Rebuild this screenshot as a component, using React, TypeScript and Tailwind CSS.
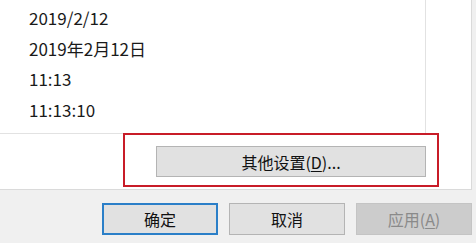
const font = { fontFamily: '"Noto Sans CJK SC", "Noto Sans", sans-serif' };

const rows = ["2019/2/12", "2019年2月12日", "11:13", "11:13:10"];

function Btn({ children, kind }: { children: React.ReactNode; kind?: "default" | "disabled" }) {
  const cls =
    kind === "default"
      ? "border-2 border-[#2b7fc8] bg-[#e1e1e1] text-[#111]"
      : kind === "disabled"
        ? "border border-[#c4c4c4] bg-[#cccccc] text-[#8a8a8a]"
        : "border border-[#b4b4b4] bg-[#e1e1e1] text-[#111]";
  return (
    <div className={`flex h-[32px] w-[116px] items-center justify-center text-[16px] ${cls}`}>{children}</div>
  );
}

export default function App() {
  return (
    <div className="relative h-[243px] w-[476px] overflow-hidden bg-[#f0f0f0]" style={font}>
      <div className="w-[472px] border-r border-b border-[#dadada] bg-white pb-[12px]">
        <div className="h-[134px] w-[426px] border-r border-b border-[#e2e2e2] bg-white pl-[29px] pt-[3px] text-[17px] leading-[30.5px] text-[#1a1a1a]">
          {rows.map((r) => (
            <div key={r}>{r}</div>
          ))}
        </div>
        <div className="pl-[156px] pt-[12px]">
          <div className="flex h-[31px] w-[270px] items-center justify-center border border-[#b4b4b4] bg-[#e1e1e1] text-[16px] text-[#111]">
            其他设置(<span className="underline underline-offset-2">D</span>)...
          </div>
        </div>
      </div>
      <div className="mt-[13px] flex gap-[11px] pl-[102px]">
        <Btn kind="default">确定</Btn>
        <Btn>取消</Btn>
        <Btn kind="disabled">
          应用(<span className="underline underline-offset-2">A</span>)
        </Btn>
      </div>
      <div className="absolute left-[123px] top-[133px] h-[54px] w-[316px] border-2 border-[#c81c28]" />
    </div>
  );
}
